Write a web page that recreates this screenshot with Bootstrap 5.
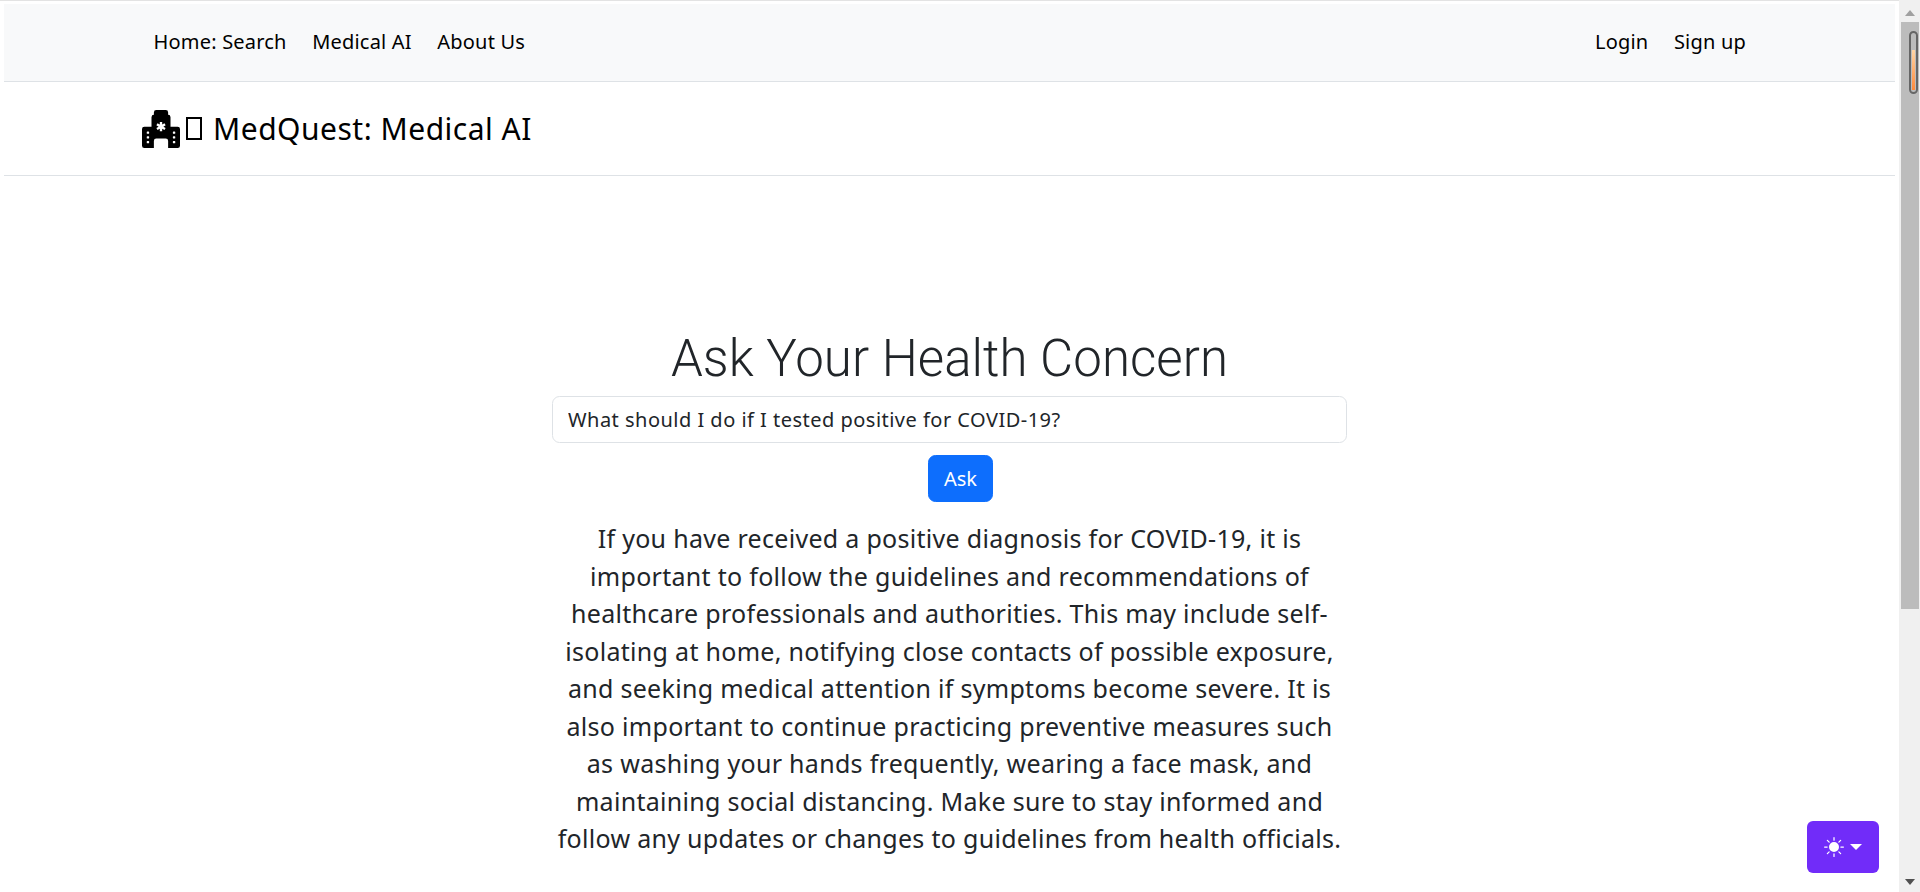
<!DOCTYPE html>
<html lang="en">
<head>
    <meta charset="UTF-8">
    <meta name="viewport" content="width=device-width, initial-scale=1.0">
    <title>MedQuest: Medical AI</title>
    <link href="https://cdn.jsdelivr.net/npm/bootstrap@5.3.0/dist/css/bootstrap.min.css" rel="stylesheet">
    <style>
html {
    font-size: 20px;
}

body {
    font-family: "Noto Sans", "Liberation Sans", sans-serif;
    letter-spacing: .3px;
    overflow: hidden;
}

.app-shell {
    height: 100vh;
    overflow: hidden;
}

.page-area {
    border-top: 1px solid #e3e3e3;
    padding: 3px 4px 0 4px;
    min-width: 0;
}

.top-bar {
    height: 78px;
    padding: 0 136px 2px 137px;
}

.top-bar .nav-link {
    color: #000;
    letter-spacing: .2px;
    padding: 0 13px 0 12.5px;
}

.brand-bar {
    height: 94px;
    padding: 0 138px;
    font-size: 30px;
    letter-spacing: .5px;
    color: #000;
}

.brand-icon {
    width: 38px;
    height: 38px;
}

.tofu-box {
    width: 16px;
    height: 23px;
    border: 2px solid #000;
    margin: 0 11px 0 6px;
}

.ask-col {
    width: 795px;
    margin: 0 auto;
    padding-top: 146px;
}

.ask-title {
    font-family: Roboto, "Noto Sans", sans-serif;
    font-size: 51px;
    font-weight: 300;
    letter-spacing: .05px;
    line-height: 73px;
    margin-bottom: 1px;
}

.ask-input {
    letter-spacing: .48px;
}

.ask-btn {
    margin-top: 12px;
    margin-left: 22px;
}

.answer-text {
    font-size: 25px;
    line-height: 37.5px;
    margin-top: 18px;
}

.fake-scrollbar {
    width: 21px;
    flex: none;
    background: #f0f0f0;
}

.scroll-btn {
    height: 21px;
}

.scroll-btn-up {
    height: 22px;
    padding-top: 4px;
}

.scroll-thumb {
    position: relative;
    height: 587px;
    margin: 0 1px 0 2px;
    background: #bcbcbc;
}

.thumb-mark {
    position: absolute;
    top: 9px;
    left: 8px;
    width: 9px;
    height: 63px;
    border: 2px solid #666;
    border-radius: 5px;
    background: linear-gradient(#ffd5a6, #ff8a3c) no-repeat center bottom 2px / 3px 40px;
}

.theme-toggle {
    position: fixed;
    right: 41px;
    bottom: 19px;
    width: 72px;
    height: 52px;
    background: #712cf9;
    border: 0;
    border-radius: 6px;
    color: #fff;
    gap: 6px;
}
    </style>
</head>
<body>
    <div class="app-shell d-flex">
        <div class="page-area flex-grow-1">
            <nav class="top-bar navbar-light bg-light border-bottom d-flex align-items-center justify-content-between">
                <ul class="nav">
                    <li class="nav-item"><a class="nav-link" href="#">Home: Search</a></li>
                    <li class="nav-item"><a class="nav-link" href="#">Medical AI</a></li>
                    <li class="nav-item"><a class="nav-link" href="#">About Us</a></li>
                </ul>
                <ul class="nav">
                    <li class="nav-item"><a class="nav-link" href="#">Login</a></li>
                    <li class="nav-item"><a class="nav-link" href="#">Sign up</a></li>
                </ul>
            </nav>
            <header class="brand-bar border-bottom d-flex align-items-center">
                <svg class="brand-icon" viewBox="0 0 16 16" fill="currentColor">
                    <path d="M6 0a1 1 0 0 0-1 1v1a1 1 0 0 0-1 1v4H1a1 1 0 0 0-1 1v7a1 1 0 0 0 1 1h14a1 1 0 0 0 1-1V8a1 1 0 0 0-1-1h-3V3a1 1 0 0 0-1-1V1a1 1 0 0 0-1-1H6Zm2.5 5.034v1.1l.953-.55.5.867L9 7l.953.55-.5.866-.953-.55v1.1h-1v-1.1l-.953.55-.5-.866L7 7l-.953-.55.5-.866.953.55v-1.1h1ZM2.25 9h.5a.25.25 0 0 1 .25.25v.5a.25.25 0 0 1-.25.25h-.5A.25.25 0 0 1 2 9.75v-.5A.25.25 0 0 1 2.25 9Zm0 2h.5a.25.25 0 0 1 .25.25v.5a.25.25 0 0 1-.25.25h-.5a.25.25 0 0 1-.25-.25v-.5a.25.25 0 0 1 .25-.25ZM2 13.25a.25.25 0 0 1 .25-.25h.5a.25.25 0 0 1 .25.25v.5a.25.25 0 0 1-.25.25h-.5a.25.25 0 0 1-.25-.25v-.5ZM13.25 9h.5a.25.25 0 0 1 .25.25v.5a.25.25 0 0 1-.25.25h-.5a.25.25 0 0 1-.25-.25v-.5a.25.25 0 0 1 .25-.25ZM13 11.25a.25.25 0 0 1 .25-.25h.5a.25.25 0 0 1 .25.25v.5a.25.25 0 0 1-.25.25h-.5a.25.25 0 0 1-.25-.25v-.5Zm.25 1.75h.5a.25.25 0 0 1 .25.25v.5a.25.25 0 0 1-.25.25h-.5a.25.25 0 0 1-.25-.25v-.5a.25.25 0 0 1 .25-.25ZM5 16v-3a1 1 0 0 1 1-1h4a1 1 0 0 1 1 1v3H5Z"/>
                </svg>
                <span class="tofu-box"></span>
                <span>MedQuest: Medical AI</span>
            </header>
            <main class="ask-col text-center">
                <h1 class="ask-title">Ask Your Health Concern</h1>
                <form>
                    <input type="text" class="form-control ask-input" value="What should I do if I tested positive for COVID-19?">
                    <button type="button" class="btn btn-primary ask-btn">Ask</button>
                </form>
                <p class="answer-text">If you have received a positive diagnosis for COVID-19, it is important to follow the guidelines and recommendations of healthcare professionals and authorities. This may include self-isolating at home, notifying close contacts of possible exposure, and seeking medical attention if symptoms become severe. It is also important to continue practicing preventive measures such as washing your hands frequently, wearing a face mask, and maintaining social distancing. Make sure to stay informed and follow any updates or changes to guidelines from health officials.</p>
            </main>
        </div>
        <div class="fake-scrollbar d-flex flex-column">
            <div class="scroll-btn scroll-btn-up d-flex align-items-center justify-content-center">
                <svg width="10" height="6" viewBox="0 0 10 6" fill="#a0a0a0"><path d="M5 0l5 6H0z"/></svg>
            </div>
            <div class="scroll-thumb"><span class="thumb-mark d-block"></span></div>
            <div class="flex-grow-1"></div>
            <div class="scroll-btn d-flex align-items-center justify-content-center">
                <svg width="10" height="6" viewBox="0 0 10 6" fill="#505050"><path d="M0 0h10L5 6z"/></svg>
            </div>
        </div>
    </div>

    <button type="button" class="theme-toggle d-flex align-items-center justify-content-center">
        <svg width="20" height="20" viewBox="0 0 16 16" fill="currentColor">
            <path d="M8 12a4 4 0 1 0 0-8 4 4 0 0 0 0 8zM8 0a.5.5 0 0 1 .5.5v2a.5.5 0 0 1-1 0v-2A.5.5 0 0 1 8 0zm0 13a.5.5 0 0 1 .5.5v2a.5.5 0 0 1-1 0v-2A.5.5 0 0 1 8 13zm8-5a.5.5 0 0 1-.5.5h-2a.5.5 0 0 1 0-1h2a.5.5 0 0 1 .5.5zM3 8a.5.5 0 0 1-.5.5h-2a.5.5 0 0 1 0-1h2A.5.5 0 0 1 3 8zm10.657-5.657a.5.5 0 0 1 0 .707l-1.414 1.415a.5.5 0 1 1-.707-.708l1.414-1.414a.5.5 0 0 1 .707 0zm-9.193 9.193a.5.5 0 0 1 0 .707L3.05 13.657a.5.5 0 0 1-.707-.707l1.414-1.414a.5.5 0 0 1 .707 0zm9.193 2.121a.5.5 0 0 1-.707 0l-1.414-1.414a.5.5 0 0 1 .707-.707l1.414 1.414a.5.5 0 0 1 0 .707zM4.464 4.465a.5.5 0 0 1-.707 0L2.343 3.05a.5.5 0 1 1 .707-.707l1.414 1.414a.5.5 0 0 1 0 .708z"/>
        </svg>
        <svg width="12" height="6" viewBox="0 0 12 6" fill="currentColor"><path d="M0 0h12L6 6z"/></svg>
    </button>

    <script src="https://cdn.jsdelivr.net/npm/bootstrap@5.3.0/dist/js/bootstrap.bundle.min.js"></script>
</body>
</html>
